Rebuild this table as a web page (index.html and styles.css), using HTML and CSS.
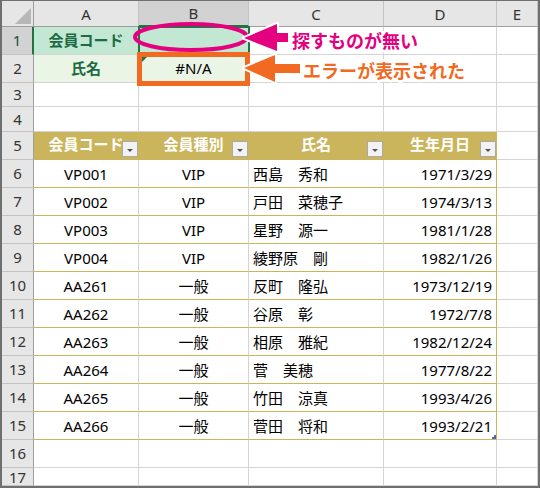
FILE: index.html
```html
<!DOCTYPE html>
<html lang="ja">
<head>
<meta charset="utf-8">
<title>Sheet</title>
<link rel="stylesheet" href="styles.css">
</head>
<body>
<div class="frame">
  <div class="grid">
    <div class="corner"><span class="corner-tri"></span></div>
    <div class="ch">A</div>
    <div class="ch ch-sel">B</div>
    <div class="ch">C</div>
    <div class="ch">D</div>
    <div class="ch">E</div>

    <div class="rh rh-sel">1</div>
    <div class="c lbl fill1">会員コード</div>
    <div class="c fill1"></div>
    <div class="c"></div><div class="c"></div><div class="c"></div>

    <div class="rh">2</div>
    <div class="c lbl fill2">氏名</div>
    <div class="c ctr fill2">#N/A</div>
    <div class="c"></div><div class="c"></div><div class="c"></div>

    <div class="rh">3</div>
    <div class="c"></div><div class="c"></div><div class="c"></div><div class="c"></div><div class="c"></div>

    <div class="rh">4</div>
    <div class="c"></div><div class="c"></div><div class="c"></div><div class="c"></div><div class="c"></div>

    <div class="rh">5</div>
    <div class="c th">会員コード<span class="fb"></span></div>
    <div class="c th">会員種別<span class="fb"></span></div>
    <div class="c th">氏名<span class="fb"></span></div>
    <div class="c th th-end">生年月日<span class="fb"></span></div>
    <div class="c"></div>

    <div class="rh">6</div>
    <div class="c td ctr">VP001</div><div class="c td ctr">VIP</div><div class="c td lft">西島　秀和</div><div class="c td rgt td-end">1971/3/29</div><div class="c"></div>
    <div class="rh">7</div>
    <div class="c td ctr">VP002</div><div class="c td ctr">VIP</div><div class="c td lft">戸田　菜穂子</div><div class="c td rgt td-end">1974/3/13</div><div class="c"></div>
    <div class="rh">8</div>
    <div class="c td ctr">VP003</div><div class="c td ctr">VIP</div><div class="c td lft">星野　源一</div><div class="c td rgt td-end">1981/1/28</div><div class="c"></div>
    <div class="rh">9</div>
    <div class="c td ctr">VP004</div><div class="c td ctr">VIP</div><div class="c td lft">綾野原　剛</div><div class="c td rgt td-end">1982/1/26</div><div class="c"></div>
    <div class="rh">10</div>
    <div class="c td ctr">AA261</div><div class="c td ctr">一般</div><div class="c td lft">反町　隆弘</div><div class="c td rgt td-end">1973/12/19</div><div class="c"></div>
    <div class="rh">11</div>
    <div class="c td ctr">AA262</div><div class="c td ctr">一般</div><div class="c td lft">谷原　彰</div><div class="c td rgt td-end">1972/7/8</div><div class="c"></div>
    <div class="rh">12</div>
    <div class="c td ctr">AA263</div><div class="c td ctr">一般</div><div class="c td lft">相原　雅紀</div><div class="c td rgt td-end">1982/12/24</div><div class="c"></div>
    <div class="rh">13</div>
    <div class="c td ctr">AA264</div><div class="c td ctr">一般</div><div class="c td lft">菅　美穂</div><div class="c td rgt td-end">1977/8/22</div><div class="c"></div>
    <div class="rh">14</div>
    <div class="c td ctr">AA265</div><div class="c td ctr">一般</div><div class="c td lft">竹田　涼真</div><div class="c td rgt td-end">1993/4/26</div><div class="c"></div>
    <div class="rh">15</div>
    <div class="c td ctr">AA266</div><div class="c td ctr">一般</div><div class="c td lft">菅田　将和</div><div class="c td rgt td-end">1993/2/21</div><div class="c"></div>

    <div class="rh">16</div>
    <div class="c"></div><div class="c"></div><div class="c"></div><div class="c"></div><div class="c"></div>
    <div class="rh rh-last">17</div>
    <div class="c"></div><div class="c"></div><div class="c"></div><div class="c"></div><div class="c"></div>
  </div>

  <svg class="overlay" width="540" height="488" viewBox="0 0 540 488" xmlns="http://www.w3.org/2000/svg">
    <rect x="139" y="27" width="110" height="27" fill="none" stroke="#217346" stroke-width="2"/>
    <polygon points="142,57 147,57 142,62" fill="#217346"/>
    <polygon points="494,435 496,435 496,439 492,439 492,437 494,437" fill="#4a68b8"/>
    <ellipse cx="191" cy="37" rx="56" ry="13" fill="none" stroke="#e4007f" stroke-width="4"/>
    <rect x="139.5" y="54.5" width="108" height="29" fill="none" stroke="#f26a21" stroke-width="5"/>
    <path d="M244,38 L277,24 L277,33 L288,33 L288,42 L277,42 L277,51 Z" fill="#e4007f" stroke="#ffffff" stroke-width="4" stroke-linejoin="round" paint-order="stroke"/>
    <path d="M244,68 L275,55 L275,64 L300,64 L300,73 L275,73 L275,82 Z" fill="#f26a21" stroke="#ffffff" stroke-width="4" stroke-linejoin="round" paint-order="stroke"/>
  </svg>
  <div class="note note-pink">探すものが無い</div>
  <div class="note note-orange">エラーが表示された</div>
</div>
</body>
</html>
```

FILE: styles.css
```css
* { box-sizing: border-box; }
html, body { margin: 0; padding: 0; background: #ffffff; }
body { font-family: "Noto Sans", "Noto Sans CJK JP", sans-serif; }

.frame {
  width: 540px;
  height: 488px;
  border: 2px solid #6f6f6f;
  border-top-width: 1px;
  position: relative;
  overflow: hidden;
}

.grid {
  display: grid;
  grid-template-columns: 32px 105px 110px 135px 113px 1fr;
  grid-template-rows: 26px 28px 28px 24px 25px repeat(12, 28px) 1fr;
  height: 100%;
}

.grid > div {
  position: relative;
  display: flex;
  align-items: center;
  justify-content: center;
  white-space: nowrap;
  overflow: hidden;
  font-size: 15px;
  line-height: 1;
  color: #000;
  border-right: 1px solid #d4d4d4;
  border-bottom: 1px solid #d4d4d4;
}

.corner {
  background: #e6e6e6;
  border-right-color: #9e9e9e !important;
  border-bottom-color: #9e9e9e !important;
}
.corner-tri {
  position: absolute;
  left: 13px;
  top: 7px;
  width: 16px;
  height: 16px;
  background: #b7b7b7;
  clip-path: polygon(100% 0, 100% 100%, 0 100%);
}

.ch {
  background: #e6e6e6;
  color: #333 !important;
  border-right-color: #c4c4c4 !important;
  border-bottom-color: #9e9e9e !important;
  padding-top: 1px;
}
.ch-sel {
  background: #d2d2d2;
  border-bottom: 2px solid #217346 !important;
}

.rh {
  background: #e6e6e6;
  color: #333 !important;
  border-right-color: #9e9e9e !important;
  border-bottom-color: #c4c4c4 !important;
}
.rh-sel {
  background: #d2d2d2;
  color: #1f4e36 !important;
  border-right: 2px solid #217346 !important;
}
.rh-last {
  overflow: visible !important;
  align-items: flex-start !important;
  padding-top: 2px;
}

.lbl { font-weight: bold; color: #1d6b44 !important; }
.fill1 { background: #c2e8d3; }
.fill2 { background: #ebf5e6; }

.th {
  background: #cbb55c;
  color: #ffffff !important;
  font-weight: bold;
  border-right-color: #cbb55c !important;
  border-bottom-color: #cbb55c !important;
  padding-bottom: 3px;
}
.fb {
  position: absolute;
  right: 0;
  bottom: 2px;
  width: 16px;
  height: 16px;
  background: #f2f2f2;
  border: 1px solid #a9a9a9;
}
.fb::after {
  content: "";
  position: absolute;
  left: 4px;
  top: 7px;
  border-left: 3px solid transparent;
  border-right: 3px solid transparent;
  border-top: 3px solid #555;
}

.td {
  border-bottom-color: #cbb55c !important;
  padding-top: 1px;
}
.td-end { border-right-color: #cbb55c !important; }
.ctr { justify-content: center; }
.lft { justify-content: flex-start !important; padding-left: 4px; }
.rgt { justify-content: flex-end !important; padding-right: 4px; }

.overlay {
  position: absolute;
  left: -2px;
  top: -1px;
  pointer-events: none;
}

.note {
  position: absolute;
  font-family: "Noto Sans CJK JP", sans-serif;
  font-weight: bold;
  font-size: 18px;
  line-height: 24px;
  white-space: nowrap;
  text-shadow:
    2px 0 0 #fff, -2px 0 0 #fff, 0 2px 0 #fff, 0 -2px 0 #fff,
    2px 2px 0 #fff, -2px -2px 0 #fff, 2px -2px 0 #fff, -2px 2px 0 #fff,
    3px 0 0 #fff, -3px 0 0 #fff, 0 3px 0 #fff, 0 -3px 0 #fff;
}
.note-pink { left: 290px; top: 27px; color: #e4007f; }
.note-orange { left: 301px; top: 57px; color: #f26a21; }
```
